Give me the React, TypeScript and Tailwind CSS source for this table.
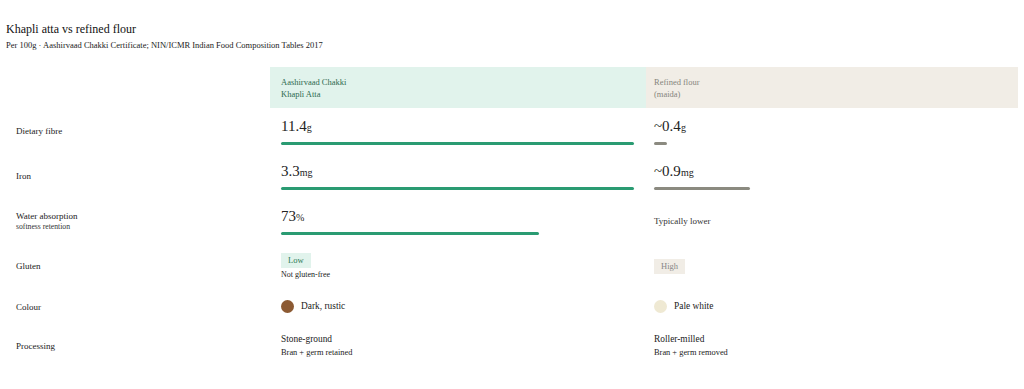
import React from 'react';

type Cell = React.ReactNode;

const serif = { fontFamily: '"Liberation Serif", "Times New Roman", serif' };

const Metric = ({ value, unit, width, tone }: { value: string; unit: string; width: number; tone: 'green' | 'gray' }) => (
  <div className="flex flex-col">
    <div className="text-[15px] leading-[18px] text-[#222]">
      {value}
      <span className="text-[10px]">{unit}</span>
    </div>
    <div
      className={`mt-[5px] h-[3px] rounded-full ${tone === 'green' ? 'bg-[#2a9b72]' : 'bg-[#8b8a80]'}`}
      style={{ width }}
    />
  </div>
);

const Row = ({ label, sub, left, right, h }: { label: string; sub?: string; left: Cell; right: Cell; h: string }) => (
  <div className={`grid grid-cols-[270px_376px_372px] ${h}`}>
    <div className="flex flex-col justify-center pl-[16px]">
      <div className="text-[9px] leading-[12px] text-[#222]">{label}</div>
      {sub && <div className="text-[7.7px] leading-[10px] text-[#333]">{sub}</div>}
    </div>
    <div className="flex flex-col justify-center pl-[11px] pr-[12px]">{left}</div>
    <div className="flex flex-col justify-center pl-[8px]">{right}</div>
  </div>
);

export default function App() {
  return (
    <div className="w-[1024px] h-[389px] bg-white pl-[6px] pr-[6px] pt-[21px]" style={serif}>
      {/* heading */}
      <h1 className="text-[12px] leading-[16px] text-[#111]">Khapli atta vs refined flour</h1>
      <p className="text-[8.5px] leading-[12px] text-[#222] mt-[2px]">
        Per 100g · Aashirvaad Chakki Certificate; NIN/ICMR Indian Food Composition Tables 2017
      </p>

      <div className="mt-[16px] -ml-[6px]">
        {/* column headers */}
        <div className="grid grid-cols-[270px_376px_372px] h-[41px]">
          <div />
          <div className="bg-[#e1f3ec] flex flex-col justify-center pl-[11px] text-[8.5px] leading-[12px] text-[#2e6a4f]">
            <span>Aashirvaad Chakki</span>
            <span>Khapli Atta</span>
          </div>
          <div className="bg-[#f1ede6] flex flex-col justify-center pl-[8px] text-[8.5px] leading-[12px] text-[#86857d]">
            <span>Refined flour</span>
            <span>(maida)</span>
          </div>
        </div>

        <Row
          h="h-[45px]"
          label="Dietary fibre"
          left={<Metric value="11.4" unit="g" width={353} tone="green" />}
          right={<Metric value="~0.4" unit="g" width={13} tone="gray" />}
        />
        <Row
          h="h-[45px]"
          label="Iron"
          left={<Metric value="3.3" unit="mg" width={353} tone="green" />}
          right={<Metric value="~0.9" unit="mg" width={96} tone="gray" />}
        />
        <Row
          h="h-[46px]"
          label="Water absorption"
          sub="softness retention"
          left={<Metric value="73" unit="%" width={258} tone="green" />}
          right={<div className="text-[9px] leading-[12px] text-[#333]">Typically lower</div>}
        />
        <Row
          h="h-[44px]"
          label="Gluten"
          left={
            <div className="flex flex-col items-start">
              <span className="bg-[#e1f3ec] text-[#2e7a57] text-[8.5px] leading-[15px] px-[7px]">Low</span>
              <span className="text-[8px] leading-[10px] text-[#222] mt-[2px]">Not gluten-free</span>
            </div>
          }
          right={
            <div className="flex">
              <span className="bg-[#f1ede6] text-[#888] text-[8.5px] leading-[15px] px-[7px]">High</span>
            </div>
          }
        />
        <Row
          h="h-[37px]"
          label="Colour"
          left={
            <div className="flex items-center gap-[7px]">
              <span className="w-[13px] h-[13px] rounded-full bg-[#8c5a33]" />
              <span className="text-[9.4px] text-[#222]">Dark, rustic</span>
            </div>
          }
          right={
            <div className="flex items-center gap-[7px]">
              <span className="w-[13px] h-[13px] rounded-full bg-[#efe9d3]" />
              <span className="text-[9.4px] text-[#222]">Pale white</span>
            </div>
          }
        />
        <Row
          h="h-[41px]"
          label="Processing"
          left={
            <div className="flex flex-col">
              <span className="text-[9.4px] leading-[13px] text-[#222]">Stone-ground</span>
              <span className="text-[8.4px] leading-[13px] text-[#222]">Bran + germ retained</span>
            </div>
          }
          right={
            <div className="flex flex-col">
              <span className="text-[9.4px] leading-[13px] text-[#222]">Roller-milled</span>
              <span className="text-[8.4px] leading-[13px] text-[#222]">Bran + germ removed</span>
            </div>
          }
        />
      </div>
    </div>
  );
}
